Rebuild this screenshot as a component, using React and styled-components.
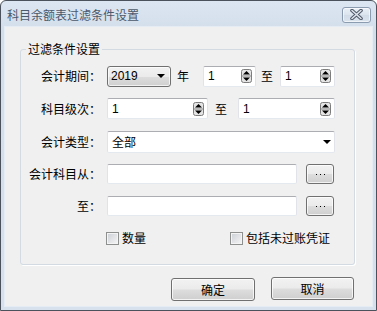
import React from 'react';
import styled, { createGlobalStyle } from 'styled-components';

const GlobalStyle = createGlobalStyle`
  html, body { margin: 0; padding: 0; background: #fff; }
  body { font-family: "Noto Sans CJK SC", "Liberation Sans", sans-serif; font-size: 12px; }
`;

const cjk = `"Noto Sans CJK SC", "Liberation Sans", sans-serif`;
const latin = `"Liberation Sans", "Noto Sans CJK SC", sans-serif`;

const Frame = styled.div`
  width: 377px;
  height: 311px;
  box-sizing: border-box;
  border: 1px solid #4b525b;
  border-radius: 6px 6px 0 0;
  background: linear-gradient(#dce6f2, #d3deeb 30px, #d6e1ed);
  padding: 0 3px 3px;
  display: flex;
  flex-direction: column;
`;

const TitleBar = styled.div`
  height: 25px;
  display: flex;
  align-items: center;
  justify-content: space-between;
  padding: 0 2px 0 3px;
`;

const Title = styled.span`
  font-family: ${cjk};
  font-size: 12px;
  line-height: 16px;
  color: #4c596b;
  margin-top: 2px;
`;

const CloseBtn = styled.div`
  width: 29px;
  height: 16px;
  box-sizing: border-box;
  border: 1px solid #8b9bb0;
  border-radius: 3px;
  background: linear-gradient(#e9eff6, #dbe4ee 50%, #d2dce8 51%, #d9e3ee);
  box-shadow: inset 0 0 0 1px rgba(255, 255, 255, 0.6);
  display: flex;
  align-items: center;
  justify-content: center;
  margin-top: 2px;
`;

const Client = styled.div`
  flex: 1;
  background: #f0f0f0;
  display: flex;
  flex-direction: column;
  box-shadow: inset 0 0 0 1px #e6ecf3;
`;

const Group = styled.fieldset`
  margin: 15px 18px 0 16px;
  padding: 3px 0 10px 0;
  border: 1px solid #d3dae2;
  border-radius: 3px;
  box-shadow: 1px 1px 0 #fff;
  min-width: 0;
`;

const Legend = styled.legend`
  font-family: ${cjk};
  font-size: 12px;
  line-height: 16px;
  color: #000;
  margin-left: 5px;
  padding: 0 2px;
`;

const Row = styled.div`
  height: ${(p) => p.$h}px;
  display: flex;
  align-items: center;
`;

const Label = styled.span`
  width: 80px;
  flex: none;
  text-align: right;
  font-family: ${cjk};
  font-size: 12px;
  line-height: 16px;
  color: #000;
  margin-right: 6px;
`;

const Word = styled.span`
  font-family: ${cjk};
  font-size: 12px;
  line-height: 16px;
  color: #000;
  margin-left: ${(p) => p.$ml}px;
  margin-right: ${(p) => p.$mr}px;
`;

const TextBox = styled.div`
  width: ${(p) => p.$w}px;
  height: ${(p) => p.$h || 20}px;
  box-sizing: border-box;
  background: #fff;
  border: 1px solid #e2e3ea;
  border-top-color: #abadb3;
  border-bottom-color: #e3e9ef;
  border-radius: 2px;
  display: flex;
  align-items: center;
  justify-content: space-between;
  padding: 0 3px 0 4px;
  font-family: ${latin};
  font-size: 12px;
  color: #000;
  flex: none;
`;

const SelectText = styled.span`
  font-family: ${cjk};
  font-size: 12px;
  line-height: 16px;
`;

const Combo = styled.div`
  width: ${(p) => p.$w}px;
  height: 21px;
  box-sizing: border-box;
  border: 1px solid #707070;
  border-radius: 3px;
  background: linear-gradient(#f2f2f2, #ebebeb 50%, #dddddd 51%, #cfcfcf);
  box-shadow: inset 0 0 0 1px rgba(255, 255, 255, 0.7);
  display: flex;
  align-items: center;
  justify-content: space-between;
  padding: 0 5px 0 3px;
  font-family: ${latin};
  font-size: 12px;
  color: #000;
  flex: none;
`;

const Btn = styled.div`
  width: ${(p) => p.$w}px;
  height: ${(p) => p.$h}px;
  box-sizing: border-box;
  border: 1px solid #707070;
  border-radius: 3px;
  background: linear-gradient(#f2f2f2, #ebebeb 48%, #dddddd 52%, #cfcfcf);
  box-shadow: inset 0 0 0 1px rgba(255, 255, 255, 0.75);
  display: flex;
  align-items: center;
  justify-content: center;
  font-family: ${cjk};
  font-size: 12px;
  line-height: 16px;
  color: #000;
  margin-left: ${(p) => p.$ml || 0}px;
  margin-top: ${(p) => p.$mt || 0}px;
  flex: none;
`;

const Dots = styled.span`
  display: flex;
  gap: 3px;
`;

const Dot = styled.span`
  width: 1px;
  height: 1px;
  background: #000;
`;

const CheckRow = styled.div`
  height: 32px;
  display: flex;
  align-items: center;
  padding-left: 85px;
`;

const CheckItem = styled.label`
  width: ${(p) => p.$w}px;
  display: flex;
  align-items: center;
  gap: 3px;
  font-family: ${cjk};
  font-size: 12px;
  line-height: 16px;
  color: #000;
  flex: none;
`;

const Box = styled.span`
  width: 13px;
  height: 13px;
  box-sizing: border-box;
  border: 1px solid #8e8f8f;
  background: linear-gradient(135deg, #cbcfd5, #f6f6f6);
  box-shadow: inset 0 0 0 1px #f4f4f4;
  flex: none;
`;

const Footer = styled.div`
  display: flex;
  justify-content: flex-end;
  gap: 16px;
  padding: 12px 19px 0 0;
`;

const Spin = () => (
  <svg width="11" height="14" viewBox="0 0 11 14">
    <rect x="0.5" y="0.5" width="10" height="13" rx="2" fill="#e4e4e4" stroke="#7d7d7d" />
    <line x1="1" y1="7" x2="10" y2="7" stroke="#8c8c8c" />
    <polygon points="2,5.5 9,5.5 5.5,2" fill="#000" />
    <polygon points="2,8.5 9,8.5 5.5,12" fill="#000" />
  </svg>
);

const Arrow = () => (
  <svg width="8" height="4" viewBox="0 0 8 4">
    <polygon points="0,0 8,0 4,4" fill="#000" />
  </svg>
);

const CloseIcon = () => (
  <svg width="13" height="11" viewBox="0 0 13 11">
    <path d="M2 1.5 L11 9.5 M11 1.5 L2 9.5" stroke="#4d5868" strokeWidth="3.6" strokeLinecap="round" />
    <path d="M2 1.5 L11 9.5 M11 1.5 L2 9.5" stroke="#dfe4ea" strokeWidth="1.6" strokeLinecap="round" />
  </svg>
);

const SpinBox = ({ w, value }) => (
  <TextBox $w={w} $h={21}>
    <span>{value}</span>
    <Spin />
  </TextBox>
);

const Browse = () => (
  <Btn $w={28} $h={20} $ml={9}>
    <Dots>
      <Dot />
      <Dot />
      <Dot />
    </Dots>
  </Btn>
);

export default function App() {
  return (
    <>
      <GlobalStyle />
      <Frame>
        <TitleBar>
          <Title>科目余额表过滤条件设置</Title>
          <CloseBtn>
            <CloseIcon />
          </CloseBtn>
        </TitleBar>
        <Client>
          <Group>
            <Legend>过滤条件设置</Legend>
            <Row $h={32}>
              <Label>会计期间：</Label>
              <Combo $w={64}>
                <span>2019</span>
                <Arrow />
              </Combo>
              <Word $ml={6} $mr={14}>年</Word>
              <SpinBox w={53} value="1" />
              <Word $ml={5} $mr={7}>至</Word>
              <SpinBox w={55} value="1" />
            </Row>
            <Row $h={33}>
              <Label>科目级次：</Label>
              <SpinBox w={101} value="1" />
              <Word $ml={7} $mr={11}>至</Word>
              <SpinBox w={97} value="1" />
            </Row>
            <Row $h={33}>
              <Label>会计类型：</Label>
              <TextBox $w={228} $h={22}>
                <SelectText>全部</SelectText>
                <Arrow />
              </TextBox>
            </Row>
            <Row $h={32}>
              <Label>会计科目从：</Label>
              <TextBox $w={190} />
              <Browse />
            </Row>
            <Row $h={32}>
              <Label>至：</Label>
              <TextBox $w={190} />
              <Browse />
            </Row>
            <CheckRow>
              <CheckItem $w={124}>
                <Box />
                数量
              </CheckItem>
              <CheckItem $w={110}>
                <Box />
                包括未过账凭证
              </CheckItem>
            </CheckRow>
          </Group>
          <Footer>
            <Btn $w={84} $h={23} $mt={1}>确定</Btn>
            <Btn $w={83} $h={23}>取消</Btn>
          </Footer>
        </Client>
      </Frame>
    </>
  );
}
